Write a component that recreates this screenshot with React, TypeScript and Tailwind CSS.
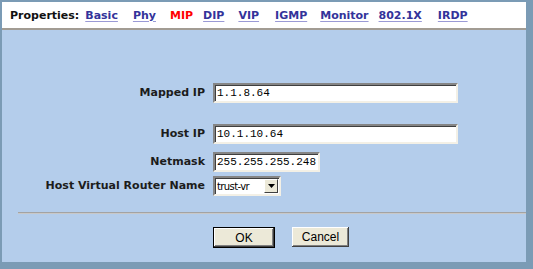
import React from 'react'

const tabs = [
  { label: 'Basic', ml: 'ml-[6px]' },
  { label: 'Phy', ml: 'ml-[15px]' },
  { label: 'MIP', ml: 'ml-[14px]', active: true },
  { label: 'DIP', ml: 'ml-[10px]' },
  { label: 'VIP', ml: 'ml-[14px]' },
  { label: 'IGMP', ml: 'ml-[16px]' },
  { label: 'Monitor', ml: 'ml-[13px]' },
  { label: '802.1X', ml: 'ml-[10px]' },
  { label: 'IRDP', ml: 'ml-[16px]' },
]

const bold = "font-['DejaVu_Sans',sans-serif] font-bold text-[11px]"
const inputCls =
  "h-[20px] bg-white border-2 border-t-[#858585] border-l-[#858585] border-r-[#f3f0e6] border-b-[#f3f0e6] shadow-[inset_1px_1px_0_#3f3f3f] pl-[2px] font-['Liberation_Mono',monospace] text-[11px] leading-[16px] text-black whitespace-nowrap overflow-hidden"

function Field({ label, value, width }: { label: string; value: string; width: string }) {
  return (
    <>
      <div className={`${bold} text-[#1c1c1c] text-right self-center`}>{label}</div>
      <div className={`${inputCls} ${width}`}>{value}</div>
    </>
  )
}

export default function App() {
  return (
    <div className="w-[533px] h-[269px] bg-[#7b9bb5] pt-[2px] pl-[2px] pr-[7px] pb-[7px] flex">
      <div className="flex-1 flex flex-col bg-[#b4cdeb]">
        {/* Tabs */}
        <div className="h-[28px] bg-white border-b-2 border-[#a29c93] flex items-center pl-[8px] pt-[2px]">
          <span className={`${bold} text-[#111]`}>Properties:</span>
          {tabs.map((t) => (
            <span
              key={t.label}
              className={`${bold} ${t.ml} ${
                t.active
                  ? 'text-[#ff0000]'
                  : 'text-[#33339a] underline decoration-[#9a9ad6] underline-offset-[2px]'
              }`}
            >
              {t.label}
            </span>
          ))}
        </div>

        {/* Form */}
        <div className="grid grid-cols-[203px_1fr] gap-x-[8px] mt-[53px]">
          <Field label="Mapped IP" value="1.1.8.64" width="w-[245px]" />
          <div className="col-span-2 h-[21px]" />
          <Field label="Host IP" value="10.1.10.64" width="w-[245px]" />
          <div className="col-span-2 h-[8px]" />
          <Field label="Netmask" value="255.255.255.248" width="w-[107px]" />
          <div className="col-span-2 h-[4px]" />
          <div className={`${bold} text-[#1c1c1c] text-right self-center`}>Host Virtual Router Name</div>
          <div className="w-[68px] h-[20px] bg-white border-2 border-t-[#858585] border-l-[#858585] border-r-[#f3f0e6] border-b-[#f3f0e6] shadow-[inset_1px_1px_0_#3f3f3f] flex items-center justify-between pl-[2px] pr-[1px]">
            <span className="font-['DejaVu_Sans',sans-serif] text-[10px] tracking-[-0.6px] text-black">trust-vr</span>
            <span className="w-[14px] h-[14px] bg-[#ece9d8] border border-t-white border-l-white border-r-[#404040] border-b-[#404040] flex items-center justify-center">
              <svg width="7" height="4" viewBox="0 0 7 4">
                <path d="M0 0h7L3.5 4z" fill="#000" />
              </svg>
            </span>
          </div>
        </div>

        {/* Separator */}
        <div className="mt-[16px] ml-[16px] h-[2px] bg-[#a3a3a3] border-b border-[#c8c8c8]" />

        {/* Buttons */}
        <div className="flex mt-[13px] pl-[211px] gap-[17px] items-start">
          <button className="w-[62px] h-[21px] bg-[#ece9d8] border border-black shadow-[inset_-1px_-1px_0_#404040,inset_1px_1px_0_#fff,inset_-2px_-2px_0_#808080] font-['Liberation_Sans',sans-serif] text-[12px] text-black">
            OK
          </button>
          <button className="w-[57px] h-[20px] bg-[#ece9d8] shadow-[inset_-1px_-1px_0_#404040,inset_1px_1px_0_#fff,inset_-2px_-2px_0_#808080] font-['Liberation_Sans',sans-serif] text-[12px] text-black">
            Cancel
          </button>
        </div>
      </div>
    </div>
  )
}
